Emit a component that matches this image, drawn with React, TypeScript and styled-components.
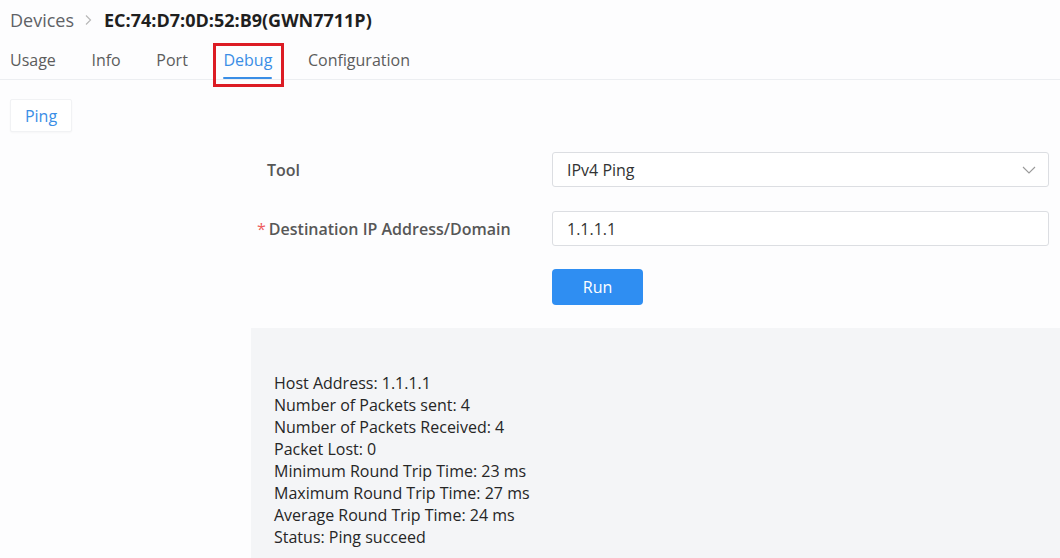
import React from 'react'
import styled, { createGlobalStyle } from 'styled-components'

const GlobalStyle = createGlobalStyle`
  html, body {
    margin: 0;
    padding: 0;
    background: #fdfdfe;
    font-family: 'Open Sans', 'Noto Sans', sans-serif;
    color: #333;
    overflow: hidden;
  }
`

const Page = styled.div`
  width: 1060px;
  height: 558px;
  overflow: hidden;
`

const Breadcrumb = styled.div`
  display: flex;
  align-items: center;
  height: 40px;
  padding-left: 10px;
  font-size: 18px;
`

const Crumb = styled.span`
  color: #606266;
`

const Separator = styled.span`
  display: flex;
  align-items: center;
  margin: 0 10px 0 8px;
  color: #b8b8b8;
`

const DeviceName = styled.span`
  color: #1f1f1f;
  font-weight: 700;
`

const TabBar = styled.nav`
  display: flex;
  gap: 35.6px;
  padding-left: 10px;
  border-bottom: 1px solid #eceef1;
`

const Tab = styled.div<{ $active?: boolean }>`
  position: relative;
  padding: 9px 0 8px;
  font-size: 16px;
  line-height: 22px;
  color: ${(p) => (p.$active ? '#3a8ee6' : '#5c5c5c')};

  &::after {
    content: '';
    position: absolute;
    left: 0;
    right: 0;
    bottom: 0;
    height: 2px;
    border-radius: 1px;
    background: ${(p) => (p.$active ? '#3a8ee6' : 'transparent')};
  }
`

const Highlight = styled.span`
  position: absolute;
  top: 3px;
  left: -10px;
  right: -12px;
  bottom: -8px;
  border: 3px solid #dc1c24;
  pointer-events: none;
`

const SubTabs = styled.div`
  display: flex;
  padding: 19px 10px 0;
`

const SubTab = styled.div`
  width: 62px;
  height: 33px;
  box-sizing: border-box;
  display: flex;
  align-items: center;
  justify-content: center;
  background: #fff;
  border: 1px solid #f1f2f4;
  border-radius: 2px;
  box-shadow: 0 1px 2px rgba(0, 0, 0, 0.03);
  font-size: 16px;
  color: #3a8ee6;
`

const Content = styled.div`
  margin: 20px 0 0 251px;
`

const Form = styled.div`
  display: grid;
  grid-template-columns: 301px 1fr;
  row-gap: 24px;
  padding-right: 11px;
`

const Label = styled.div`
  display: flex;
  align-items: center;
  padding-left: 16px;
  font-size: 16px;
  font-weight: 600;
  color: #575757;
`

const Required = styled.span`
  margin: 0 3px 0 -10px;
  color: #ee5c5c;
  font-weight: 400;
`

const Field = styled.div`
  display: flex;
  align-items: center;
  justify-content: space-between;
  height: 35px;
  box-sizing: border-box;
  padding: 0 12px 0 14px;
  background: #fff;
  border: 1px solid #dcdee2;
  border-radius: 3px;
  font-size: 16px;
  color: #333;
`

const Actions = styled.div`
  grid-column: 2;
  margin-top: -1px;
`

const RunButton = styled.button`
  width: 91px;
  height: 36px;
  padding-top: 1px;
  border: none;
  border-radius: 4px;
  background: #2f8ef2;
  color: #fff;
  font-family: inherit;
  font-size: 16px;
  cursor: pointer;
`

const Output = styled.pre`
  margin: 23px 0 0;
  min-height: 260px;
  padding: 44px 23px;
  background: #f4f5f7;
  font-family: inherit;
  font-size: 16px;
  line-height: 22px;
  color: #262626;
  white-space: pre-wrap;
`

const Chevron = ({ size = 12 }: { size?: number }) => (
  <svg width={size} height={size} viewBox="0 0 12 12" fill="none">
    <path d="M4 1.5 8.5 6 4 10.5" stroke="currentColor" strokeWidth="1.2" />
  </svg>
)

const ChevronDown = () => (
  <svg width="14" height="8" viewBox="0 0 14 8" fill="none">
    <path d="M1 1l6 6 6-6" stroke="#9a9a9a" strokeWidth="1.1" />
  </svg>
)

const tabs = ['Usage', 'Info', 'Port', 'Debug', 'Configuration']

const result = [
  'Host Address: 1.1.1.1',
  'Number of Packets sent: 4',
  'Number of Packets Received: 4',
  'Packet Lost: 0',
  'Minimum Round Trip Time: 23 ms',
  'Maximum Round Trip Time: 27 ms',
  'Average Round Trip Time: 24 ms',
  'Status: Ping succeed',
].join('\n')

export default function App() {
  return (
    <Page>
      <GlobalStyle />
      <Breadcrumb>
        <Crumb>Devices</Crumb>
        <Separator>
          <Chevron />
        </Separator>
        <DeviceName>EC:74:D7:0D:52:B9(GWN7711P)</DeviceName>
      </Breadcrumb>

      <TabBar>
        {tabs.map((t) => (
          <Tab key={t} $active={t === 'Debug'}>
            {t}
            {t === 'Debug' && <Highlight />}
          </Tab>
        ))}
      </TabBar>

      <SubTabs>
        <SubTab>Ping</SubTab>
      </SubTabs>

      <Content>
        <Form>
          <Label>Tool</Label>
          <Field>
            IPv4 Ping
            <ChevronDown />
          </Field>

          <Label>
            <Required>*</Required>
            Destination IP Address/Domain
          </Label>
          <Field>1.1.1.1</Field>

          <Actions>
            <RunButton>Run</RunButton>
          </Actions>
        </Form>

        <Output>{result}</Output>
      </Content>
    </Page>
  )
}
